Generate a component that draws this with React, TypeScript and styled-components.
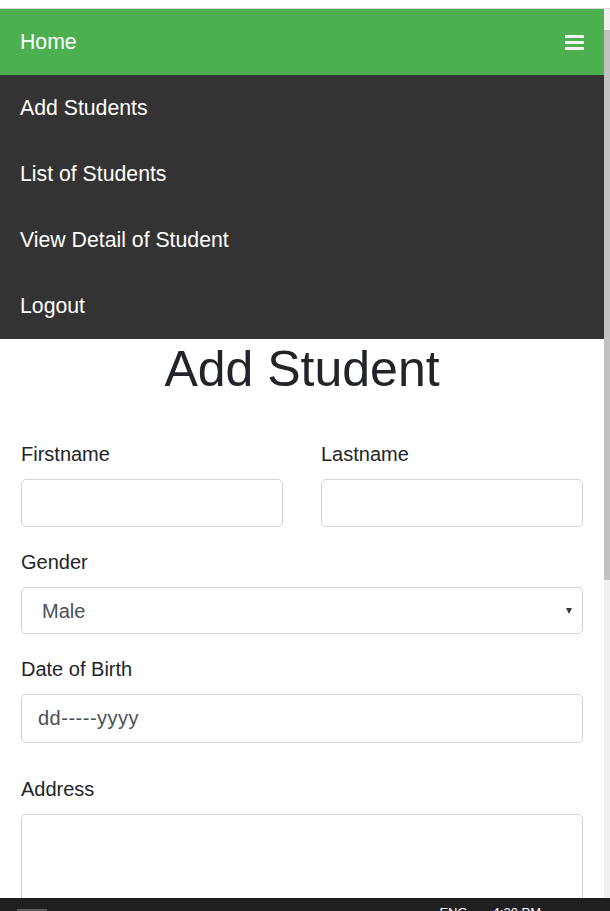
import React from "react";
import styled, { createGlobalStyle } from "styled-components";

const GlobalStyle = createGlobalStyle`
  html, body {
    margin: 0;
    padding: 0;
    height: 911px;
    overflow: hidden;
    background: #ffffff;
  }
  * { box-sizing: border-box; }
  body {
    font-family: "Liberation Sans", Arial, Helvetica, sans-serif;
    color: #212529;
  }
`;

const Screen = styled.div`
  height: 911px;
  display: flex;
  flex-direction: column;
`;

const BrowserEdge = styled.div`
  height: 9px;
  flex: none;
  background: #ffffff;
  border-bottom: 1px solid #d9d9d9;
`;

const Middle = styled.div`
  flex: 1;
  min-height: 0;
  display: flex;
`;

const Viewport = styled.div`
  flex: 1;
  min-width: 0;
  overflow: hidden;
  background: #ffffff;
`;

const ScrollTrack = styled.div`
  width: 6px;
  flex: none;
  background: #f0f0f0;
  padding-top: 21px;
`;

const ScrollThumb = styled.div`
  height: 550px;
  background: #c1c1c1;
`;

const Nav = styled.nav`
  display: flex;
  flex-direction: column;
`;

const NavItem = styled.a<{ $active?: boolean }>`
  height: 66px;
  display: flex;
  align-items: center;
  justify-content: space-between;
  padding: 0 20px;
  background: ${(p) => (p.$active ? "#4caf50" : "#333333")};
  color: #ffffff;
  font-size: 21.25px;
  line-height: 66px;
  text-decoration: none;
`;

const MenuIcon = () => (
  <svg width="19" height="15" viewBox="0 0 19 15" aria-hidden="true">
    <rect x="0" y="0" width="19" height="3" rx="0.8" fill="#f4f4f4" />
    <rect x="0" y="6" width="19" height="3" rx="0.8" fill="#f4f4f4" />
    <rect x="0" y="12" width="19" height="3" rx="0.8" fill="#f4f4f4" />
  </svg>
);

const Content = styled.main`
  padding: 0 21px;
`;

const Title = styled.h1`
  margin: 0 0 40px;
  text-align: center;
  font-size: 50px;
  line-height: 60px;
  font-weight: 400;
  color: #212529;
`;

const Form = styled.form`
  display: flex;
  flex-direction: column;
`;

const Row = styled.div`
  display: grid;
  grid-template-columns: 1fr 1fr;
  column-gap: 38px;
`;

const Group = styled.div<{ $gap?: number }>`
  display: flex;
  flex-direction: column;
  margin-bottom: ${(p) => p.$gap ?? 20}px;
`;

const Label = styled.label`
  font-size: 20px;
  line-height: 30px;
  margin-bottom: 10px;
  color: #212529;
`;

const Field = styled.input<{ $h?: number; $spacing?: number }>`
  height: ${(p) => p.$h ?? 48}px;
  width: 100%;
  border: 1px solid #ced4da;
  border-radius: 5px;
  padding: 0 15px 0 16px;
  font-family: "Liberation Sans", Arial, sans-serif;
  font-size: 20px;
  letter-spacing: ${(p) => p.$spacing ?? 0}px;
  color: #495057;
  background: #ffffff;
  outline: none;
`;

const SelectWrap = styled.div`
  position: relative;
`;

const Select = styled.select`
  appearance: none;
  -webkit-appearance: none;
  height: 47px;
  width: 100%;
  border: 1px solid #ced4da;
  border-radius: 5px;
  padding: 0 15px 0 20px;
  font-family: "Liberation Sans", Arial, sans-serif;
  font-size: 20px;
  color: #495057;
  background: #ffffff;
  outline: none;
`;

const Caret = styled.span`
  position: absolute;
  right: 11px;
  top: 21px;
  width: 0;
  height: 0;
  border-left: 3.5px solid transparent;
  border-right: 3.5px solid transparent;
  border-top: 6px solid #3a3a3a;
  pointer-events: none;
`;

const TextArea = styled.textarea`
  height: 120px;
  width: 100%;
  border: 1px solid #ced4da;
  border-radius: 5px;
  padding: 10px 15px;
  font-family: "Liberation Sans", Arial, sans-serif;
  font-size: 20px;
  color: #495057;
  resize: none;
  outline: none;
`;

const Taskbar = styled.div`
  height: 13px;
  flex: none;
  background: #202020;
  display: flex;
  align-items: flex-start;
  overflow: hidden;
  padding-left: 17px;
  padding-right: 69px;
`;

const StartTile = styled.div`
  width: 30px;
  height: 2px;
  margin-top: 11px;
  background: #5a5a5a;
  border-radius: 1px 1px 0 0;
`;

const Tray = styled.div`
  margin-left: auto;
  display: flex;
  gap: 25px;
  padding-top: 8px;
  color: #ffffff;
  font-family: "Liberation Sans", Arial, sans-serif;
  font-size: 13px;
  line-height: 13px;
  white-space: nowrap;
`;

const navLinks = ["Add Students", "List of Students", "View Detail of Student", "Logout"];

export default function App() {
  return (
    <>
      <GlobalStyle />
      <Screen>
        <BrowserEdge />
        <Middle>
          <Viewport>
            <Nav>
              <NavItem $active href="#">
                Home
                <MenuIcon />
              </NavItem>
              {navLinks.map((l) => (
                <NavItem key={l} href="#">
                  {l}
                </NavItem>
              ))}
            </Nav>
            <Content>
              <Title>Add Student</Title>
              <Form onSubmit={(e) => e.preventDefault()}>
                <Row>
                  <Group>
                    <Label htmlFor="fn">Firstname</Label>
                    <Field id="fn" type="text" />
                  </Group>
                  <Group>
                    <Label htmlFor="ln">Lastname</Label>
                    <Field id="ln" type="text" />
                  </Group>
                </Row>
                <Group>
                  <Label htmlFor="gender">Gender</Label>
                  <SelectWrap>
                    <Select id="gender" defaultValue="Male">
                      <option>Male</option>
                      <option>Female</option>
                    </Select>
                    <Caret />
                  </SelectWrap>
                </Group>
                <Group $gap={31}>
                  <Label htmlFor="dob">Date of Birth</Label>
                  <Field id="dob" type="text" $h={49} $spacing={0.5} defaultValue="dd-----yyyy" readOnly />
                </Group>
                <Group>
                  <Label htmlFor="addr">Address</Label>
                  <TextArea id="addr" />
                </Group>
              </Form>
            </Content>
          </Viewport>
          <ScrollTrack>
            <ScrollThumb />
          </ScrollTrack>
        </Middle>
        <Taskbar>
          <StartTile />
          <Tray>
            <span>ENG</span>
            <span>4:30 PM</span>
          </Tray>
        </Taskbar>
      </Screen>
    </>
  );
}
